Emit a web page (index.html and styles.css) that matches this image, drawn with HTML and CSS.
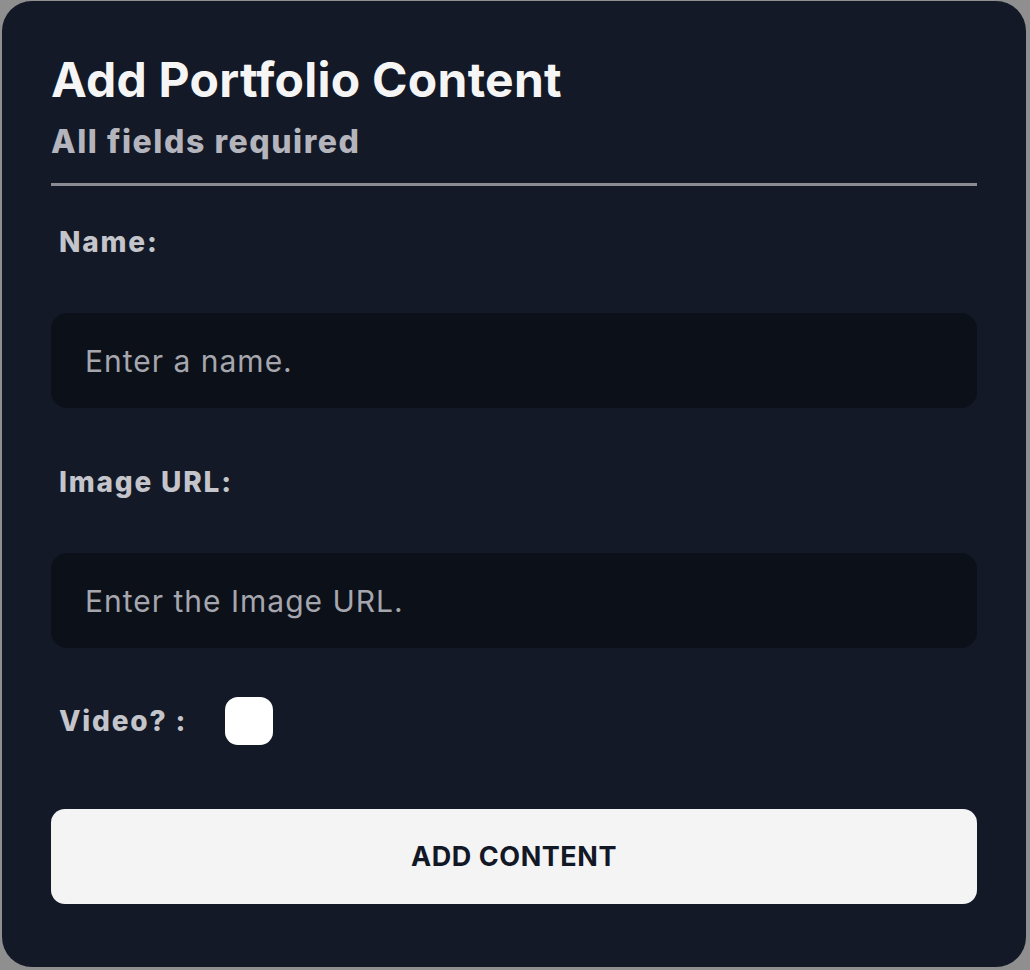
FILE: index.html
```html
<!DOCTYPE html>
<html lang="en">
<head>
<meta charset="utf-8">
<title>Add Portfolio Content</title>
<link rel="stylesheet" href="styles.css">
</head>
<body>
<form class="modal">
  <h1 class="title">Add Portfolio Content</h1>
  <p class="subtitle">All fields required</p>
  <hr class="divider">
  <label class="label label-first" for="name">Name:</label>
  <input class="field" id="name" type="text" placeholder="Enter a name.">
  <label class="label label-next" for="url">Image URL:</label>
  <input class="field" id="url" type="text" placeholder="Enter the Image URL.">
  <div class="video-row">
    <label class="label video-label" for="video">Video? :</label>
    <input class="check" id="video" type="checkbox">
  </div>
  <button class="submit" type="button">ADD CONTENT</button>
</form>
</body>
</html>
```
FILE: styles.css
```css
html, body {
  margin: 0;
  padding: 0;
  background: #8f8f90;
  width: 1030px;
  height: 970px;
  overflow: hidden;
  font-family: Inter, "Noto Sans", "Liberation Sans", sans-serif;
}

.modal {
  box-sizing: border-box;
  margin: 1px 0 0 2px;
  width: 1024px;
  padding: 50px 49px 63px;
  border-radius: 30px;
  background: #131926;
  display: flex;
  flex-direction: column;
}

.title {
  margin: 0;
  font-size: 48px;
  line-height: 58px;
  font-weight: 700;
  letter-spacing: 0.25px;
  color: #f5f5f5;
}

.subtitle {
  margin: 13px 0 0;
  font-size: 32px;
  line-height: 39px;
  font-weight: 800;
  letter-spacing: 1.55px;
  color: #b4b4bc;
}

.divider {
  margin: 22px 0 0;
  border: 0;
  height: 3px;
  background: #8b8c93;
}

.label {
  font-size: 28px;
  line-height: 34px;
  font-weight: 800;
  letter-spacing: 1.8px;
  color: #c4c4cb;
  padding-left: 8px;
}

.label-first {
  margin-top: 39px;
}

.label-next {
  margin-top: 57px;
}

.field {
  box-sizing: border-box;
  margin-top: 54px;
  width: 100%;
  height: 95px;
  border: 0;
  border-radius: 16px;
  background: #0c1019;
  padding: 0 34px;
  font-family: inherit;
  font-size: 30px;
  letter-spacing: 1px;
  color: #e5e5ea;
  outline: none;
}

.field::placeholder {
  color: #a6a6ae;
}

.video-row {
  margin-top: 49px;
  display: flex;
  align-items: center;
  gap: 38px;
}

.check {
  appearance: none;
  -webkit-appearance: none;
  margin: 0;
  width: 48px;
  height: 48px;
  border-radius: 13px;
  background: #ffffff;
}

.submit {
  margin-top: 64px;
  height: 95px;
  border: 0;
  border-radius: 14px;
  background: #f4f4f5;
  font-family: inherit;
  font-size: 27px;
  font-weight: 700;
  letter-spacing: 0.55px;
  color: #131826;
}
```
